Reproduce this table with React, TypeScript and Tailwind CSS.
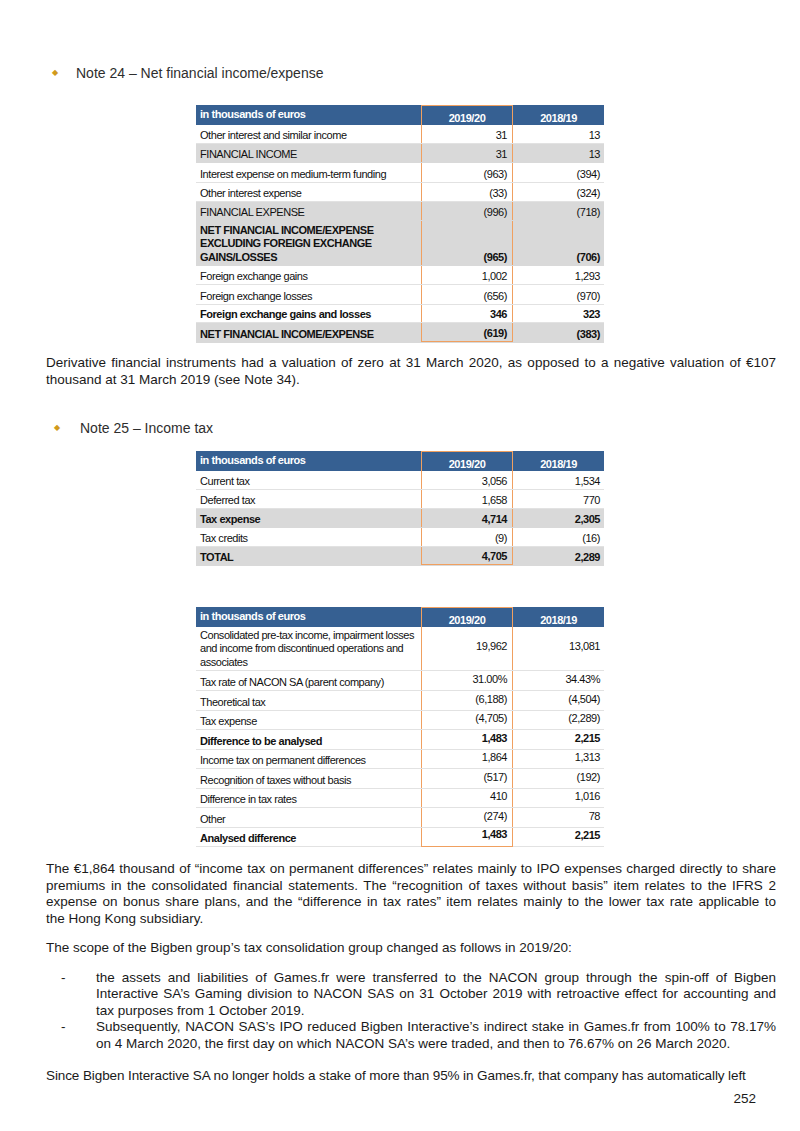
import type { ReactNode } from "react";
import clsx from "clsx";

type Row = {
  label: ReactNode;
  a: string;
  b: string;
  h: string;
  bold?: boolean;
  gray?: boolean;
  middle?: boolean;
};

const FINANCIAL_ROWS: Row[] = [
  { label: "Other interest and similar income", a: "31", b: "13", h: "h-[19px]" },
  { label: "FINANCIAL INCOME", a: "31", b: "13", h: "h-[19px]", gray: true },
  { label: "Interest expense on medium-term funding", a: "(963)", b: "(394)", h: "h-[20px]" },
  { label: "Other interest expense", a: "(33)", b: "(324)", h: "h-[19px]" },
  { label: "FINANCIAL EXPENSE", a: "(996)", b: "(718)", h: "h-[19px]", gray: true },
  {
    label: (
      <>
        NET FINANCIAL INCOME/EXPENSE
        <br />
        EXCLUDING FOREIGN EXCHANGE
        <br />
        GAINS/LOSSES
      </>
    ),
    a: "(965)",
    b: "(706)",
    h: "h-[45px]",
    bold: true,
    gray: true,
  },
  { label: "Foreign exchange gains", a: "1,002", b: "1,293", h: "h-[19px]" },
  { label: "Foreign exchange losses", a: "(656)", b: "(970)", h: "h-[20px]" },
  { label: "Foreign exchange gains and losses", a: "346", b: "323", h: "h-[18px]", bold: true },
  { label: "NET FINANCIAL INCOME/EXPENSE", a: "(619)", b: "(383)", h: "h-[20px]", bold: true, gray: true },
];

const TAX_ROWS: Row[] = [
  { label: "Current tax", a: "3,056", b: "1,534", h: "h-[19px]" },
  { label: "Deferred tax", a: "1,658", b: "770", h: "h-[19px]" },
  { label: "Tax expense", a: "4,714", b: "2,305", h: "h-[19px]", bold: true, gray: true },
  { label: "Tax credits", a: "(9)", b: "(16)", h: "h-[19px]" },
  { label: "TOTAL", a: "4,705", b: "2,289", h: "h-[19px]", bold: true, gray: true },
];

const PROOF_ROWS: Row[] = [
  {
    label: (
      <>
        Consolidated pre-tax income, impairment losses
        <br />
        and income from discontinued operations and
        <br />
        associates
      </>
    ),
    a: "19,962",
    b: "13,081",
    h: "h-[44px]",
    middle: true,
  },
  { label: "Tax rate of NACON SA (parent company)", a: "31.00%", b: "34.43%", h: "h-[20px]" },
  { label: "Theoretical tax", a: "(6,188)", b: "(4,504)", h: "h-[20px]" },
  { label: "Tax expense", a: "(4,705)", b: "(2,289)", h: "h-[19px]" },
  { label: "Difference to be analysed", a: "1,483", b: "2,215", h: "h-[20px]", bold: true },
  { label: "Income tax on permanent differences", a: "1,864", b: "1,313", h: "h-[19px]" },
  { label: "Recognition of taxes without basis", a: "(517)", b: "(192)", h: "h-[20px]" },
  { label: "Difference in tax rates", a: "410", b: "1,016", h: "h-[19px]" },
  { label: "Other", a: "(274)", b: "78", h: "h-[20px]" },
  { label: "Analysed difference", a: "1,483", b: "2,215", h: "h-[19px]", bold: true },
];

function NoteHeading({ children, indent }: { children: ReactNode; indent: string }) {
  return (
    <div className="flex h-[16px] items-center text-[14px] text-[#2e2e2e]">
      <span className={clsx("text-[8px] text-[#d19a1c]", indent)}>◆</span>
      <span>{children}</span>
    </div>
  );
}

function DataTable({ rows, raised }: { rows: Row[]; raised?: boolean }) {
  return (
    <div className="ml-[150px] w-[408px] text-[11px] leading-[13.5px] tracking-[-0.45px] text-[#111]">
      <div className="grid h-[20px] grid-cols-[225px_92px_91px] bg-[#366092] font-bold text-white">
        <div className="px-[4px] pt-[3px]">in thousands of euros</div>
        <div className="flex items-end justify-center border-x border-t border-[#f0a060] pb-[0px]">
          2019/20
        </div>
        <div className="flex items-end justify-center pb-[0px]">2018/19</div>
      </div>
      {rows.map((row, index) => {
        const last = index === rows.length - 1;
        return (
          <div
            key={index}
            className={clsx(
              "grid grid-cols-[225px_92px_91px] border-b",
              row.h,
              row.gray ? "border-[#d9d9d9] bg-[#d9d9d9]" : "border-[#e2e2e2] bg-white",
              row.bold && "font-bold",
            )}
          >
            <div className="flex items-end whitespace-nowrap px-[4px] pb-[1px]">
              <span>{row.label}</span>
            </div>
            <div
              className={clsx(
                "flex justify-end border-x border-[#f0a060] px-[5px]",
                row.middle ? "items-center" : "items-end",
                raised ? "pb-[4px]" : "pb-[1px]",
                last && "border-b",
              )}
            >
              {row.a}
            </div>
            <div
              className={clsx(
                "flex justify-end px-[4px]",
                row.middle ? "items-center" : "items-end",
                raised ? "pb-[4px]" : "pb-[1px]",
              )}
            >
              {row.b}
            </div>
          </div>
        );
      })}
    </div>
  );
}

function Justified({ lines }: { lines: string[] }) {
  return (
    <>
      {lines.map((line, index) => (
        <span
          key={index}
          className={clsx(
            "block whitespace-nowrap",
            index < lines.length - 1 && "text-justify [text-align-last:justify]",
          )}
        >
          {line}
        </span>
      ))}
    </>
  );
}

export default function App() {
  return (
    <div className="relative h-[1131px] w-[800px] overflow-hidden bg-white font-['Liberation_Sans',Arial,sans-serif] text-[#1a1a1a]">
      <div className="pl-[46px] pr-[24px] pt-[65px]">
        <NoteHeading indent="ml-[6px] mr-[18px]">Note 24 – Net financial income/expense</NoteHeading>

        <div className="mt-[24px]">
          <DataTable rows={FINANCIAL_ROWS} />
        </div>

        <p className="mt-[12px] text-[13.5px] leading-[16.5px]">
          <Justified
            lines={[
              "Derivative financial instruments had a valuation of zero at 31 March 2020, as opposed to a negative valuation of €107",
              "thousand at 31 March 2019 (see Note 34).",
            ]}
          />
        </p>

        <div className="mt-[32px]">
          <NoteHeading indent="ml-[8px] mr-[20px]">Note 25 – Income tax</NoteHeading>
        </div>

        <div className="mt-[15px]">
          <DataTable rows={TAX_ROWS} />
        </div>

        <div className="mt-[41px]">
          <DataTable rows={PROOF_ROWS} raised />
        </div>

        <p className="mt-[14px] text-[13.5px] leading-[16.5px]">
          <Justified
            lines={[
              "The €1,864 thousand of “income tax on permanent differences” relates mainly to IPO expenses charged directly to share",
              "premiums in the consolidated financial statements. The “recognition of taxes without basis” item relates to the IFRS 2",
              "expense on bonus share plans, and the “difference in tax rates” item relates mainly to the lower tax rate applicable to",
              "the Hong Kong subsidiary.",
            ]}
          />
        </p>

        <p className="mt-[13px] whitespace-nowrap text-[13.5px] leading-[16.5px]">
          The scope of the Bigben group’s tax consolidation group changed as follows in 2019/20:
        </p>

        <ul className="mt-[13px] text-[13.5px] leading-[16.5px]">
          <li className="flex">
            <span className="w-[50px] shrink-0 pl-[15px]">-</span>
            <span className="min-w-0 flex-1">
              <Justified
                lines={[
                  "the assets and liabilities of Games.fr were transferred to the NACON group through the spin-off of Bigben",
                  "Interactive SA’s Gaming division to NACON SAS on 31 October 2019 with retroactive effect for accounting and",
                  "tax purposes from 1 October 2019.",
                ]}
              />
            </span>
          </li>
          <li className="flex">
            <span className="w-[50px] shrink-0 pl-[15px]">-</span>
            <span className="min-w-0 flex-1">
              <Justified
                lines={[
                  "Subsequently, NACON SAS’s IPO reduced Bigben Interactive’s indirect stake in Games.fr from 100% to 78.17%",
                  "on 4 March 2020, the first day on which NACON SA’s were traded, and then to 76.67% on 26 March 2020.",
                ]}
              />
            </span>
          </li>
        </ul>

        <p className="mt-[16px] whitespace-nowrap text-[13.5px] leading-[16.5px] tracking-[-0.1px]">
          Since Bigben Interactive SA no longer holds a stake of more than 95% in Games.fr, that company has automatically left
        </p>

        <p className="mr-[20px] mt-[6px] text-right text-[13.5px] leading-[16.5px]">252</p>
      </div>
    </div>
  );
}
